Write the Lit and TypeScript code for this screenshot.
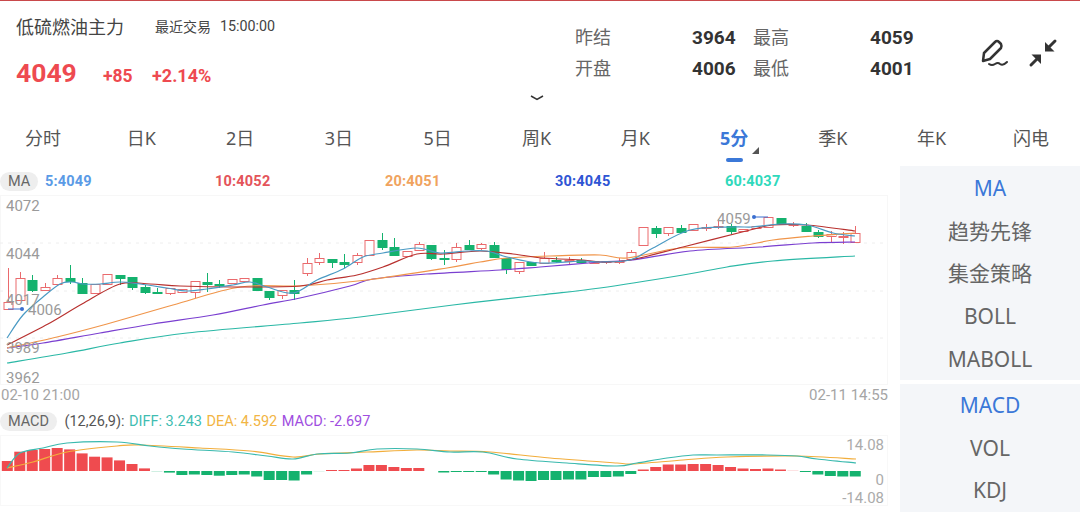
import { LitElement, html, css, svg } from 'lit';
import { customElement } from 'lit/decorators.js';

// body top/bottom and wick top/bottom in chart pixels, then up/down
type Candle = [number, number, number, number, boolean];
type Pt = [number, number];

const candles: Candle[] = [
  [302, 309, 268, 309, true], [278, 300, 272, 300, true], [280, 290, 275, 292, false], [287, 290, 283, 290, true],
  [278, 284, 275, 285, true], [278, 281, 265, 284, false], [283, 293, 278, 293, false], [284, 293, 284, 293, true],
  [274, 284, 274, 284, true], [275, 278, 275, 285, false], [277, 287, 277, 290, false], [287, 292, 285, 294, false],
  [292, 293, 288, 294, false], [288, 293, 288, 295, true], [289, 292, 289, 292, true], [281, 292, 281, 298, true],
  [282, 284, 273, 292, false], [284, 285, 280, 288, false], [279, 283, 279, 283, true], [278, 281, 278, 281, true],
  [278, 290, 278, 290, false], [291, 297, 291, 300, false], [290, 295, 290, 299, true], [290, 293, 280, 300, false],
  [263, 273, 258, 276, true], [258, 262, 253, 265, true], [259, 262, 259, 268, false], [262, 264, 254, 268, false],
  [255, 262, 253, 265, true], [240, 255, 240, 255, true], [240, 247, 233, 250, false], [247, 255, 238, 255, false],
  [251, 256, 251, 256, true], [244, 250, 242, 250, true], [245, 258, 245, 260, false], [258, 259, 250, 265, false],
  [247, 259, 243, 262, true], [245, 249, 240, 249, false], [244, 248, 243, 250, true], [245, 257, 242, 257, false],
  [258, 269, 258, 274, false], [262, 271, 262, 274, true], [262, 265, 262, 265, false], [258, 263, 252, 263, true],
  [260, 261, 257, 263, false], [260, 261, 257, 264, true], [260, 262, 258, 263, false], [261, 263, 261, 263, true],
  [261, 262, 261, 264, true], [261, 262, 258, 264, true], [252, 259, 250, 259, true], [227, 245, 227, 245, true],
  [228, 233, 226, 238, false], [227, 233, 227, 236, true], [228, 232, 225, 232, false], [224, 230, 224, 230, true],
  [227, 228, 224, 231, true], [226, 227, 219, 229, true], [226, 231, 224, 234, false], [229, 231, 229, 231, true],
  [226, 228, 226, 228, true], [217, 227, 217, 227, true], [218, 224, 218, 224, false], [224, 225, 222, 227, true],
  [226, 231, 223, 231, false], [232, 236, 230, 238, false], [234, 236, 231, 243, true], [236, 237, 232, 244, true],
  [233, 242, 226, 242, true],
];

const maLines: [string, Pt[]][] = [
  ['#2bb8a6', [[7, 363], [67, 353], [120, 343], [187, 333], [300, 323], [360, 317], [453, 305], [540, 295], [600, 288], [683, 275], [727, 267], [773, 261], [855, 256]]],
  ['#7a3fd0', [[7, 348], [43, 343], [100, 333], [153, 324], [213, 315], [263, 305], [300, 298], [350, 286], [373, 279], [427, 274], [500, 270], [540, 267], [600, 262], [633, 260], [690, 251], [760, 247], [813, 243], [855, 242]]],
  ['#f0954a', [[7, 348], [57, 337], [107, 324], [173, 305], [240, 287], [300, 286], [367, 280], [447, 268], [480, 262], [507, 258], [550, 256], [600, 255], [627, 258], [680, 248], [733, 247], [773, 240], [813, 236], [855, 233]]],
  ['#b8312f', [[7, 345], [48, 324], [82, 304], [120, 284], [150, 284], [180, 286], [233, 287], [300, 286], [327, 280], [357, 275], [383, 267], [417, 254], [443, 254], [480, 251], [513, 254], [543, 258], [583, 260], [600, 262], [630, 260], [683, 247], [750, 230], [773, 225], [807, 225], [855, 231]]],
  ['#4a9ac4', [[7, 338], [23, 315], [43, 297], [60, 284], [72, 282], [83, 284], [100, 284], [120, 282], [140, 284], [167, 288], [187, 291], [207, 289], [233, 285], [250, 282], [267, 287], [293, 293], [317, 280], [343, 269], [363, 257], [383, 253], [417, 248], [440, 253], [467, 251], [487, 251], [507, 257], [540, 263], [583, 261], [600, 262], [630, 260], [653, 248], [690, 230], [733, 227], [753, 227], [780, 224], [807, 225], [833, 233], [855, 236]]],
];

const macdBars = [
  10, 19.3, 21, 22, 23, 21.6, 17.6, 14.3, 13.6, 10.6, 7, 2.6, -0.5, -1.6, -4, -3.5, -4, -4.7, -4, -3.5, -5.5, -9, -9, -9.5, -3.5,
  -0.3, 1, 1, 2.5, 6, 6, 4, 3, 3, 0, -1.5, -1, -1, -1, -3.5, -8.5, -9.5, -10, -9, -9, -8.5, -8.5, -6, -6, -5.5, -3,
  1.5, 4, 6.5, 6.5, 7, 7, 6, 4, 2.5, 2, 2.5, 1.5, 0.4, -1, -3.5, -5, -5.5, -5.5,
];

const diffLine: Pt[] = [[7, 468], [20, 453], [43, 448], [67, 443], [117, 442], [150, 446], [183, 449], [233, 452], [267, 456], [293, 459], [317, 454], [350, 453], [377, 449], [417, 449], [450, 452], [483, 452], [517, 459], [567, 463], [617, 466], [637, 463], [667, 458], [693, 455], [717, 455], [767, 455], [797, 456], [817, 459], [856, 463]];
const deaLine: Pt[] = [[7, 468], [33, 462], [67, 452], [117, 446], [140, 445], [200, 448], [250, 451], [293, 457], [320, 454], [367, 452], [417, 450], [450, 451], [490, 452], [550, 458], [617, 463], [633, 464], [683, 460], [727, 457], [797, 456], [856, 459]];

// catmull-rom through the sampled points, the real chart draws smooth curves
const smooth = (p: Pt[]) => {
  let d = `M${p[0][0]} ${p[0][1]}`;
  for (let i = 0; i < p.length - 1; i++) {
    const a = p[i - 1] ?? p[i];
    const b = p[i];
    const c = p[i + 1];
    const e = p[i + 2] ?? c;
    const c1 = [b[0] + (c[0] - a[0]) / 6, b[1] + (c[1] - a[1]) / 6];
    const c2 = [c[0] - (e[0] - b[0]) / 6, c[1] - (e[1] - b[1]) / 6];
    d += ` C${c1[0]} ${c1[1]} ${c2[0]} ${c2[1]} ${c[0]} ${c[1]}`;
  }
  return d;
};

const RED = '#ef4b4f';
const GREEN = '#14b26e';

@customElement('app-root')
export class AppRoot extends LitElement {
  private tabs = ['分时', '日K', '2日', '3日', '5日', '周K', '月K', '5分', '季K', '年K', '闪电'];

  private renderKline() {
    return html`
      <svg class="plot" width="888" height="190" viewBox="0 195 888 190">
        <rect x="0.5" y="195.5" width="887" height="189" fill="none" stroke="#f7f7f7" />
        ${[243, 291, 338].map((y) => svg`<line x1="0" x2="887" y1=${y} y2=${y} stroke="#eeeeee" stroke-dasharray="3 5" />`)}
        ${candles.map(([t, b, wt, wb, up], i) => {
          const x = Math.round(7.5 + i * 12.47) + 0.5;
          const c = up ? '#ea6a6d' : GREEN;
          const h = Math.max(b - t, 1);
          return svg`
            <line x1=${x} x2=${x} y1=${wt} y2=${wb} stroke=${c} />
            <rect x=${x - 4.5} y=${t + 0.5} width="9" height=${h} fill=${up ? '#fff' : c} stroke=${c} />`;
        })}
        ${maLines.map(([c, l]) => svg`<path d=${smooth(l)} fill="none" stroke=${c} stroke-width="1.2" />`)}
        <g class="axis">
          <text x="6" y="211">4072</text>
          <text x="6" y="259">4044</text>
          <text x="6" y="305">4017</text>
          <text x="6" y="353">3989</text>
          <text x="6" y="383">3962</text>
          <text x="28" y="315">4006</text>
          <text x="717" y="224">4059</text>
        </g>
        <polyline points="8,309 22,309" fill="none" stroke="#3a6fd0" />
        <circle cx="22" cy="309" r="2" fill="#3a6fd0" />
        <polyline points="754,217 768,217" fill="none" stroke="#3a6fd0" />
        <circle cx="754" cy="217" r="2" fill="#3a6fd0" />
      </svg>`;
  }

  private renderMacd() {
    const zero = 471;
    return html`
      <svg class="plot" width="888" height="71" viewBox="0 435 888 71">
        <rect x="0.5" y="435.5" width="887" height="70" fill="none" stroke="#f8f8f8" />
        ${macdBars.map((v, i) => {
          const x = 1.8 + i * 12.47;
          const small = Math.abs(v) < 0.6;
          return svg`<rect x=${x} y=${v > 0 ? zero - v : zero} width="11" height=${Math.abs(v)}
            fill=${v > 0 ? RED : GREEN} opacity=${small ? 0.4 : 1} />`;
        })}
        <path d=${smooth(deaLine)} fill="none" stroke="#f2ae3c" stroke-width="1.2" />
        <path d=${smooth(diffLine)} fill="none" stroke="#39b9ae" stroke-width="1.2" />
        <g class="axis light" text-anchor="end">
          <text x="884" y="450">14.08</text>
          <text x="884" y="485">0</text>
          <text x="884" y="503">-14.08</text>
        </g>
      </svg>`;
  }

  render() {
    return html`
      <header class="head">
        <div class="quote">
          <div class="title"><span class="name">低硫燃油主力</span><span class="recent">最近交易</span><span class="time">15:00:00</span></div>
          <div class="price"><b>4049</b><span class="chg">+85</span><span class="pct">+2.14%</span></div>
        </div>
        <div class="stats">
          <span class="k">昨结</span><b>3964</b><span class="k">最高</span><b>4059</b>
          <span class="k">开盘</span><b>4006</b><span class="k">最低</span><b>4001</b>
        </div>
        <div class="tools">
          <svg width="30" height="30" viewBox="0 0 30 30" fill="none" stroke="#333" stroke-width="2.5" stroke-linejoin="round" stroke-linecap="round">
            <path d="M3 23 L4 15 L15 4 Q17 2 19 4 L21 6 Q22 8 21 10 L10 21 Z" />
            <path d="M9 26 Q12 28 15 26 Q18 24 20 26 Q23 28 27 24" stroke-width="2" />
          </svg>
          <svg width="30" height="30" viewBox="0 0 30 30" fill="#333" stroke="#333" stroke-width="3" stroke-linecap="round">
            <path d="M27 3 L19 11" />
            <path d="M17 4 V13.500 H26.500 Z" stroke="none" />
            <path d="M3 27 L11 19" />
            <path d="M13 26 V16.500 H3.500 Z" stroke="none" />
          </svg>
        </div>
      </header>
      <div class="chev">
        <svg width="14" height="6" viewBox="0 0 14 6" fill="none" stroke="#333" stroke-width="1.5"><path d="M1 1 L7 4.500 L13 1" /></svg>
      </div>
      <nav class="tabs">
        ${this.tabs.map((t) => html`<span class=${t === '5分' ? 'tab on' : 'tab'}>${t}</span>`)}
      </nav>
      <main class="body">
        <section class="charts">
          <div class="legend">
            <span class="pill">MA</span>
            <div class="mas">
              <span class="ma5">5:4049</span>
              <span class="ma10">10:4052</span>
              <span class="ma20">20:4051</span>
              <span class="ma30">30:4045</span>
              <span class="ma60">60:4037</span>
            </div>
          </div>
          ${this.renderKline()}
          <div class="dates"><span>02-10 21:00</span><span>02-11 14:55</span></div>
          <div class="macd-legend">
            <span class="pill wide">MACD</span>
            <span class="params">(12,26,9):</span>
            <span class="diff">DIFF: 3.243</span>
            <span class="dea">DEA: 4.592</span>
            <span class="macd">MACD: -2.697</span>
          </div>
          ${this.renderMacd()}
        </section>
        <aside class="side">
          <div class="group first">
            <span class="on">MA</span><span>趋势先锋</span><span>集金策略</span><span>BOLL</span><span>MABOLL</span>
          </div>
          <div class="group">
            <span class="on">MACD</span><span>VOL</span><span>KDJ</span>
          </div>
        </aside>
      </main>
    `;
  }

  static styles = css`
    * {
      margin: 0;
      padding: 0;
      box-sizing: border-box;
    }
    :host {
      display: block;
      width: 1080px;
      height: 512px;
      overflow: hidden;
      background: #fff;
      border-top: 1px solid #c9494b;
      font-family: 'Noto Sans', 'Noto Sans CJK SC', sans-serif;
      color: #444;
    }
    .head {
      display: flex;
      height: 90px;
      padding: 13px 0 0 16px;
    }
    .quote {
      width: 559px;
    }
    .title {
      display: flex;
      align-items: center;
      height: 24px;
    }
    .name {
      font-size: 18px;
      width: 139px;
    }
    .recent {
      font-size: 14px;
      width: 65px;
    }
    .time {
      font-family: Roboto, sans-serif;
      font-size: 14.3px;
    }
    .price {
      display: flex;
      align-items: baseline;
      margin-top: 19px;
      font-family: Roboto, sans-serif;
      color: #ee4a50;
    }
    .price b {
      font-size: 26.5px;
      width: 87px;
    }
    .price span {
      font-weight: 700;
    }
    .chg {
      font-size: 17.5px;
      width: 49px;
    }
    .pct {
      font-size: 18px;
    }
    .stats {
      display: grid;
      grid-template-columns: 117px 61px 117px 96px;
      grid-auto-rows: 31px;
      align-items: center;
      width: 391px;
      margin-top: 8px;
      height: 62px;
      font-size: 18px;
    }
    .stats .k {
      color: #666;
      margin-bottom: 3px;
    }
    .stats b {
      font-family: Roboto, sans-serif;
      font-size: 19px;
      font-weight: 700;
      color: #333;
    }
    .tools {
      display: flex;
      gap: 18px;
      margin: 24px 0 0 14px;
      height: 30px;
    }
    .chev {
      display: flex;
      justify-content: center;
      height: 8px;
      margin-top: 4px;
      padding-right: 6px;
    }
    .tabs {
      display: flex;
      justify-content: space-between;
      height: 63px;
      padding: 23px 32px 0 25px;
    }
    .tab {
      position: relative;
      width: 35px;
      height: 40px;
      text-align: center;
      white-space: nowrap;
      font-size: 18px;
      line-height: 25px;
      color: #555;
    }
    .tab.on {
      color: #3b78d8;
      font-weight: 700;
    }
    .tab.on::before {
      content: '';
      position: absolute;
      left: 9px;
      top: 32px;
      width: 17px;
      height: 4px;
      border-radius: 2px;
      background: #3b78d8;
    }
    .tab.on::after {
      content: '';
      position: absolute;
      left: 35px;
      top: 21px;
      border-style: solid;
      border-width: 0 0 7px 7px;
      border-color: transparent transparent #555 transparent;
    }
    .body {
      display: flex;
      height: 346px;
    }
    .charts {
      width: 900px;
    }
    .legend {
      display: flex;
      align-items: center;
      height: 29px;
      padding-top: 1px;
    }
    .pill {
      display: inline-flex;
      align-items: center;
      justify-content: center;
      flex: none;
      width: 38px;
      height: 19px;
      border-radius: 10px;
      background: #eeeeee;
      color: #666;
      font-size: 14.5px;
      font-family: Roboto, sans-serif;
    }
    .pill.wide {
      width: 57px;
    }
    .mas {
      display: flex;
      margin-left: 7px;
      font-family: Roboto, sans-serif;
      font-size: 14.5px;
      font-weight: 700;
      letter-spacing: 0.2px;
    }
    .mas span {
      width: 170px;
    }
    .ma5 { color: #5b9be6; }
    .ma10 { color: #e4545a; }
    .ma20 { color: #f0a35e; }
    .ma30 { color: #2f55d4; }
    .ma60 { color: #2fd9bc; }
    .plot {
      display: block;
      overflow: visible;
    }
    .axis {
      font-family: Roboto, sans-serif;
      font-size: 15px;
      fill: #9a9a9a;
    }
    .axis.light {
      fill: #ababab;
    }
    .dates {
      display: flex;
      justify-content: space-between;
      width: 888px;
      height: 20px;
      padding-left: 1px;
      font-family: Roboto, sans-serif;
      font-size: 15px;
      line-height: 20px;
      color: #a5a5a5;
    }
    .macd-legend {
      display: flex;
      align-items: center;
      gap: 4.5px;
      height: 30px;
      padding-top: 3px;
      font-family: Roboto, sans-serif;
      font-size: 14.5px;
    }
    .params {
      margin-left: 3px;
      color: #555;
    }
    .diff { color: #3fbdb2; }
    .dea { color: #f2b544; }
    .macd { color: #a04ee0; }
    .side {
      display: flex;
      flex-direction: column;
      gap: 4px;
      flex: 1;
    }
    .group {
      display: flex;
      flex-direction: column;
      flex: 1;
      background: #f4f6f9;
      text-align: center;
      font-size: 21px;
      color: #666;
    }
    .group.first {
      flex: none;
      height: 214px;
      padding-top: 1px;
    }
    .group span {
      height: 42.7px;
      line-height: 42.7px;
    }
    .group .on {
      color: #3b78d8;
    }
  `;
}
